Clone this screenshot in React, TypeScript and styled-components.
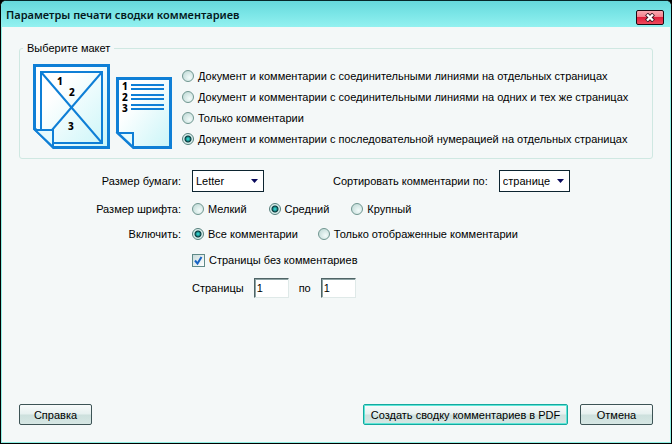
import React from "react";
import styled, { createGlobalStyle } from "styled-components";

const GlobalStyle = createGlobalStyle`
  *, *::before, *::after { box-sizing: border-box; }
  body {
    margin: 0;
    background: #000;
    color: #000;
    font: 11px/14px "Liberation Sans", Tahoma, sans-serif;
  }
  button, input, select { font: inherit; color: inherit; }
`;

const Dialog = styled.form`
  display: flex;
  flex-direction: column;
  min-height: 100vh;
  padding: 1px;
  border: 1px solid #000;
  border-top-color: #06282a;
  border-radius: 6px 6px 0 0;
  background: #f4f8f8;
  box-shadow: inset 0 0 0 1px #8ff0e4;
`;

const TitleBar = styled.header`
  display: flex;
  align-items: flex-start;
  justify-content: space-between;
  height: 26px;
  margin: -1px -1px 0;
  padding: 6px 7px 0 5px;
  border-radius: 5px 5px 0 0;
  background: linear-gradient(#66d9dc, #7be6e7 50%, #93f1f0);
`;

const Title = styled.h1`
  margin: 0;
  font: 600 11px/16px "Noto Sans", "Segoe UI", sans-serif;
  color: #03181c;
`;

const CloseButton = styled.button`
  display: grid;
  place-items: center;
  width: 28px;
  height: 15px;
  margin-top: 3px;
  padding: 0;
  border: 1px solid #1d0810;
  border-radius: 2px;
  background: linear-gradient(#f9a9b0, #f37f8c 48%, #de1f3b 50%, #f04a5c);
`;

const Content = styled.main`
  flex: 1;
  padding: 14px 17px 0;
`;

const LayoutGroup = styled.fieldset`
  display: flex;
  align-items: flex-start;
  gap: 10px;
  margin: 0;
  padding: 9px 13px 8px;
  border: 1px solid #cfe8e2;
  border-radius: 3px;

  legend {
    margin-left: -10px;
    padding: 0 4px;
  }
`;

const Preview = styled.svg`
  flex: none;
  width: 139px;
  height: 86px;
`;

const RadioList = styled.div`
  display: flex;
  flex-direction: column;
  gap: 7px;
  padding-top: 5px;
`;

const ChoiceLabel = styled.label`
  display: inline-flex;
  align-items: center;
  gap: 4px;
  white-space: nowrap;
`;

const Radio = styled.input.attrs({ type: "radio" })`
  appearance: none;
  width: 12px;
  height: 12px;
  margin: 0;
  border: 1px solid #6f9690;
  border-radius: 50%;
  background: radial-gradient(circle at 65% 65%, #f2fbfa, #b9d5d1);

  &:checked {
    border-color: #557f7c;
    background: radial-gradient(circle at 50% 50%, #2fc9c4 0 1px, #06363a 3px, #d9efec 4px);
  }
`;

const Checkbox = styled.span`
  display: grid;
  width: 13px;
  height: 13px;

  > * { grid-area: 1 / 1; }

  input {
    appearance: none;
    width: 13px;
    height: 13px;
    margin: 0;
    border: 1px solid #5f8a88;
    background: linear-gradient(135deg, #c9dcdc, #fff);
  }
  svg { display: none; pointer-events: none; }
  input:checked + svg { display: block; }
`;

const FormGrid = styled.div`
  display: grid;
  grid-template-columns: 162px 1fr;
  column-gap: 11px;
  margin-top: 11px;
`;

const RowLabel = styled.div`
  justify-self: end;
  align-self: center;
`;

const Field = styled.div<{ $height: number; $gap?: number }>`
  display: flex;
  align-items: center;
  gap: ${(p) => p.$gap ?? 0}px;
  height: ${(p) => p.$height}px;
  white-space: nowrap;
`;

const SelectBox = styled.span<{ $width: number }>`
  display: grid;
  align-items: center;
  width: ${(p) => p.$width}px;

  > * { grid-area: 1 / 1; }

  select {
    appearance: none;
    width: 100%;
    height: 22px;
    padding: 0 3px;
    border: 1px solid #0c2430;
    border-radius: 0;
    background: #fff;
  }
  svg {
    justify-self: end;
    margin-right: 6px;
    pointer-events: none;
  }
`;

const SortLabel = styled.label`
  display: flex;
  align-items: center;
  gap: 11px;
`;

const PageInput = styled.input`
  width: 35px;
  height: 20px;
  padding: 0 2px 1px;
  border: 1px solid;
  border-color: #4f6466 #dfe9e8 #dfe9e8 #4f6466;
  border-radius: 0;
  background: #fff;
  box-shadow: inset 1px 1px 0 #8da3a4;
`;

const Footer = styled.footer`
  display: flex;
  gap: 12px;
  padding: 0 17px 17px;
`;

const Button = styled.button<{ $width: number; $primary?: boolean }>`
  width: ${(p) => p.$width}px;
  height: 21px;
  padding: 0;
  border: 1px solid ${(p) => (p.$primary ? "#14a99f" : "#3d5456")};
  border-radius: 2px;
  background: linear-gradient(#f8fbfb, #e6f0ef 48%, #cde0dd 52%, #d6e7e4);
  box-shadow: ${(p) => (p.$primary ? "inset 0 0 0 1px #5fe6d8" : "none")};
  white-space: nowrap;

  &:first-child { margin-right: auto; }
`;

const PreviewDigit = styled.text`
  font: 800 10px "Noto Sans", sans-serif;
  fill: #000;
`;

function LayoutPreview() {
  return (
    <Preview viewBox="0 0 139 86" aria-hidden="true">
      <defs>
        <linearGradient id="paper" x1="0" y1="0" x2="1" y2="1">
          <stop offset="0.3" stopColor="#fff" />
          <stop offset="1" stopColor="#c9f5f8" />
        </linearGradient>
      </defs>
      <g fill="url(#paper)" stroke="#0f7fd6" strokeWidth="3">
        <path d="M1.5 1.5H75.5V83.5H20.5L1.5 64.5Z" />
        <path d="M84.5 14.5H137.5V83.5H100.5L84.5 68.5Z" />
      </g>
      <g fill="none" stroke="#0f7fd6" strokeWidth="2">
        <path d="M8 65V8H69V79H21M8 8L69 79M69 8L19 66" />
        <path d="M2 66H20V83Z" fill="#e6fbfd" />
        <path d="M85 69H100V83Z" fill="#e6fbfd" />
        <path d="M98 21H131M98 25H131M98 31H131M98 35H131M98 41H131M98 45H131" />
      </g>
      <PreviewDigit x="24" y="21">1</PreviewDigit>
      <PreviewDigit x="36" y="32">2</PreviewDigit>
      <PreviewDigit x="35" y="66">3</PreviewDigit>
      <PreviewDigit x="89" y="26">1</PreviewDigit>
      <PreviewDigit x="89" y="37">2</PreviewDigit>
      <PreviewDigit x="89" y="48">3</PreviewDigit>
    </Preview>
  );
}

function Choice({ name, text, checked }: { name: string; text: string; checked?: boolean }) {
  return (
    <ChoiceLabel>
      <Radio name={name} defaultChecked={checked} />
      {text}
    </ChoiceLabel>
  );
}

function Select({ id, width, value }: { id: string; width: number; value: string }) {
  return (
    <SelectBox $width={width}>
      <select id={id} defaultValue={value}>
        <option>{value}</option>
      </select>
      <svg width="7" height="4" viewBox="0 0 7 4" aria-hidden="true">
        <path d="M0 0H7L3.5 4Z" fill="#0a0a5c" />
      </svg>
    </SelectBox>
  );
}

export default function App() {
  return (
    <>
      <GlobalStyle />
      <Dialog onSubmit={(e) => e.preventDefault()}>
        <TitleBar>
          <Title>Параметры печати сводки комментариев</Title>
          <CloseButton type="button" aria-label="Закрыть">
            <svg width="12" height="9" viewBox="0 0 12 9" aria-hidden="true">
              <path d="M2.5 1L9.5 8M9.5 1L2.5 8" stroke="#3a1520" strokeWidth="4" />
              <path d="M3 1.5L9 7.5M9 1.5L3 7.5" stroke="#fff" strokeWidth="2.4" />
            </svg>
          </CloseButton>
        </TitleBar>
        <Content>
          <LayoutGroup>
            <legend>Выберите макет</legend>
            <LayoutPreview />
            <RadioList>
              <Choice name="layout" text="Документ и комментарии с соединительными линиями на отдельных страницах" />
              <Choice name="layout" text="Документ и комментарии с соединительными линиями на одних и тех же страницах" />
              <Choice name="layout" text="Только комментарии" />
              <Choice name="layout" text="Документ и комментарии с последовательной нумерацией на отдельных страницах" checked />
            </RadioList>
          </LayoutGroup>
          <FormGrid>
            <RowLabel as="label" htmlFor="paper-size">Размер бумаги:</RowLabel>
            <Field $height={22} $gap={69}>
              <Select id="paper-size" width={72} value="Letter" />
              <SortLabel htmlFor="sort-by">
                Сортировать комментарии по:
                <Select id="sort-by" width={71} value="странице" />
              </SortLabel>
            </Field>
            <RowLabel>Размер шрифта:</RowLabel>
            <Field $height={34} $gap={22} role="radiogroup" aria-label="Размер шрифта">
              <Choice name="font" text="Мелкий" />
              <Choice name="font" text="Средний" checked />
              <Choice name="font" text="Крупный" />
            </Field>
            <RowLabel>Включить:</RowLabel>
            <Field $height={16} $gap={20} role="radiogroup" aria-label="Включить">
              <Choice name="include" text="Все комментарии" checked />
              <Choice name="include" text="Только отображенные комментарии" />
            </Field>
            <span />
            <Field $height={36}>
              <ChoiceLabel>
                <Checkbox>
                  <input type="checkbox" defaultChecked />
                  <svg width="13" height="13" viewBox="0 0 13 13" aria-hidden="true">
                    <path d="M3 6.5L5.5 9.5L9.5 3" fill="none" stroke="#1763c4" strokeWidth="2" />
                  </svg>
                </Checkbox>
                Страницы без комментариев
              </ChoiceLabel>
            </Field>
            <span />
            <Field $height={20} $gap={10}>
              <label htmlFor="page-from">Страницы</label>
              <PageInput id="page-from" defaultValue="1" />
              <label htmlFor="page-to">по</label>
              <PageInput id="page-to" defaultValue="1" />
            </Field>
          </FormGrid>
        </Content>
        <Footer>
          <Button type="button" $width={73}>Справка</Button>
          <Button type="submit" $width={205} $primary>Создать сводку комментариев в PDF</Button>
          <Button type="button" $width={73}>Отмена</Button>
        </Footer>
      </Dialog>
    </>
  );
}
